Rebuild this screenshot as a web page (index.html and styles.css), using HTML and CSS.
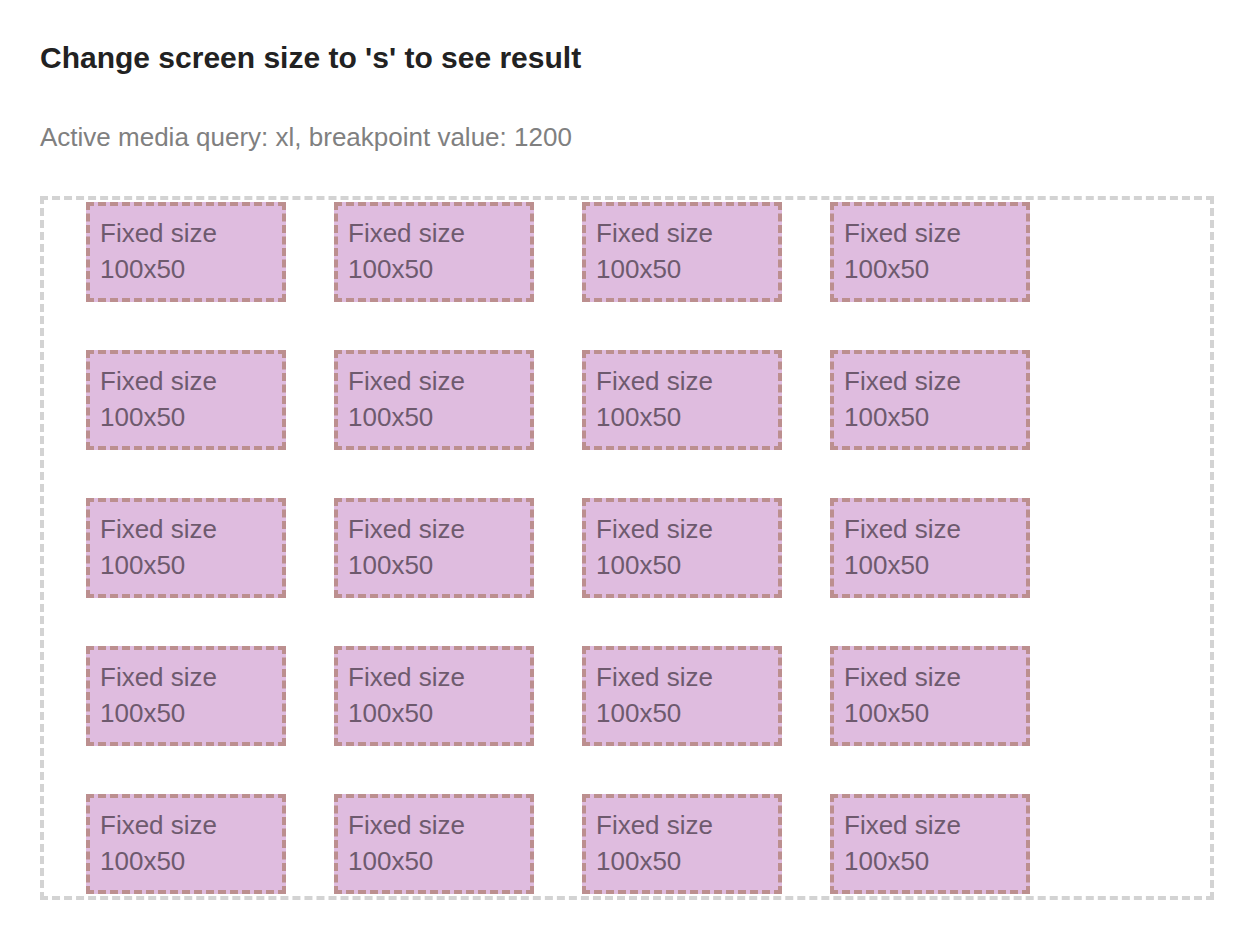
FILE: index.html
```html
<!DOCTYPE html>
<html lang="en">
<head>
<meta charset="utf-8">
<title>Fixed size grid</title>
<link rel="stylesheet" href="styles.css">
</head>
<body>
<main class="page">
  <h2 class="title">Change screen size to 's' to see result</h2>
  <p class="info">Active media query: xl, breakpoint value: 1200</p>
  <section class="container">
    <div class="box">Fixed size<br>100x50</div>
    <div class="box">Fixed size<br>100x50</div>
    <div class="box">Fixed size<br>100x50</div>
    <div class="box">Fixed size<br>100x50</div>
    <div class="box">Fixed size<br>100x50</div>
    <div class="box">Fixed size<br>100x50</div>
    <div class="box">Fixed size<br>100x50</div>
    <div class="box">Fixed size<br>100x50</div>
    <div class="box">Fixed size<br>100x50</div>
    <div class="box">Fixed size<br>100x50</div>
    <div class="box">Fixed size<br>100x50</div>
    <div class="box">Fixed size<br>100x50</div>
    <div class="box">Fixed size<br>100x50</div>
    <div class="box">Fixed size<br>100x50</div>
    <div class="box">Fixed size<br>100x50</div>
    <div class="box">Fixed size<br>100x50</div>
    <div class="box">Fixed size<br>100x50</div>
    <div class="box">Fixed size<br>100x50</div>
    <div class="box">Fixed size<br>100x50</div>
    <div class="box">Fixed size<br>100x50</div>
  </section>
</main>
</body>
</html>
```
FILE: styles.css
```css
html, body {
  margin: 0;
  padding: 0;
  background: #ffffff;
}

body {
  font-family: "Liberation Sans", Arial, sans-serif;
}

.page {
  padding: 42px 28px 40px 40px;
}

.title {
  margin: 0;
  font-size: 30px;
  line-height: 32px;
  font-weight: bold;
  color: #222222;
}

.info {
  margin: 45px 0 0;
  font-size: 26px;
  line-height: 36px;
  color: #808080;
}

.container {
  margin-top: 41px;
  border: 4px dashed #d3d3d3;
  padding: 2px 0 2px 42px;
  display: grid;
  grid-template-columns: repeat(4, 200px);
  column-gap: 48px;
  row-gap: 48px;
}

.box {
  box-sizing: border-box;
  width: 200px;
  height: 100px;
  border: 4px dashed #bc8f8f;
  background: #dfbcdf;
  color: #6e5a6e;
  padding: 9px 10px 11px;
  font-size: 26px;
  line-height: 36px;
}
```
